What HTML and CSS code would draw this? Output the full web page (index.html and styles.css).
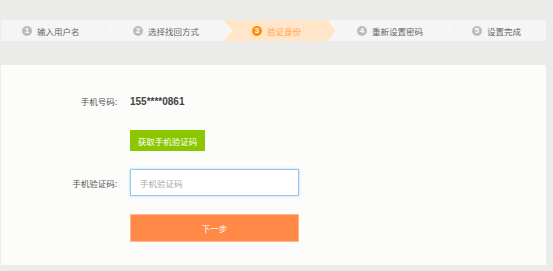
FILE: index.html
```html
<!DOCTYPE html>
<html lang="zh-CN">
  <head>
    <meta charset="utf-8" />
    <title>找回密码 - 验证身份</title>
    <link rel="stylesheet" href="styles.css">
  </head>
  <body>
    <div class="steps">
      <div class="step s1"><span class="num">1</span>输入用户名</div>
      <div class="step s2"><span class="num">2</span>选择找回方式</div>
      <div class="step s3 active"><span class="num">3</span>验证身份</div>
      <div class="step s4"><span class="num">4</span>重新设置密码</div>
      <div class="step s5"><span class="num">5</span>设置完成</div>
    </div>

    <div class="panel">
      <div class="row phone-row">
        <label class="label">手机号码:</label>
        <span class="phone">155****0861</span>
      </div>
      <div class="row send-row">
        <span class="label"></span>
        <button class="send">获取手机验证码</button>
      </div>
      <div class="row code-row">
        <label class="label" for="code">手机验证码:</label>
        <input id="code" class="code" type="text" placeholder="手机验证码" />
      </div>
      <div class="row next-row">
        <span class="label"></span>
        <button class="next">下一步</button>
      </div>
    </div>
  </body>
</html>
```

FILE: styles.css
```css
body {
  margin: 0;
  background-color: #ebebea;
  font-family: "Noto Sans CJK SC", "Noto Sans", sans-serif;
  font-size: 8.5px;
  color: #555;
}

/* step bar */
.steps {
  display: flex;
  width: 545px;
  height: 21px;
  margin: 20px 0 0 1px;
}
.step {
  position: relative;
  display: flex;
  align-items: center;
  flex: none;
  padding-left: 29px;
  box-sizing: border-box;
  background-color: #f5f5f5;
  color: #666;
}
.step::before,
.step::after {
  content: "";
  position: absolute;
  top: 0;
  height: 100%;
  z-index: 1;
  clip-path: polygon(0 0, 100% 50%, 0 100%);
}
.step::before {
  right: -9px;
  width: 9px;
  background-color: #fff;
}
.step::after {
  right: -8px;
  width: 8px;
  background-color: #f5f5f5;
}
.s1 { width: 103px; padding-left: 21px; }
.s2 { width: 119px; }
.s3 { width: 105px; }
.s4 { width: 115px; }
.s5 { flex: 1; }
.s5::before,
.s5::after { display: none; }

.num {
  display: inline-flex;
  align-items: center;
  justify-content: center;
  width: 10px;
  height: 10px;
  margin-right: 5px;
  border-radius: 50%;
  background-color: #bcbcbc;
  color: #fff;
  font-family: "Liberation Sans", sans-serif;
  font-weight: bold;
  font-size: 8px;
}

.step.active {
  background-color: #ffe6c8;
  color: #ffa547;
}
.step.active::after { background-color: #ffe6c8; }
.step.active .num { background-color: #ff8c06; }

/* form panel */
.panel {
  width: 545px;
  height: 200px;
  margin: 24px 0 0 1px;
  padding-top: 26px;
  box-sizing: border-box;
  background-color: #fcfcfa;
}
.row {
  display: flex;
  align-items: center;
  gap: 13px;
}
.label {
  width: 116px;
  flex: none;
  text-align: right;
  color: #555;
}
.phone-row { height: 20px; }
.phone {
  font-family: "Liberation Sans", sans-serif;
  font-weight: bold;
  font-size: 10px;
  color: #444;
}
.send-row { margin-top: 19px; }
.code-row { margin-top: 18px; }
.next-row { margin-top: 18px; }

.send {
  width: 75px;
  height: 21px;
  padding: 0;
  border: none;
  background-color: #8bc700;
  color: #fff;
  font-family: inherit;
  font-size: 8.5px;
}
.code {
  width: 169px;
  height: 27px;
  padding: 0 0 0 9px;
  box-sizing: border-box;
  border: 1px solid #95c8f2;
  box-shadow: 0 0 2px rgba(110, 175, 240, 0.6);
  background-color: #fff;
  font-family: inherit;
  font-size: 8.5px;
  outline: none;
}
.code::placeholder { color: #aaa; }
.next {
  width: 169px;
  height: 28px;
  padding: 0;
  border: 1px solid #ffb48c;
  background-color: #ff8a48;
  color: #fff;
  font-family: inherit;
  font-size: 8.5px;
}
```
